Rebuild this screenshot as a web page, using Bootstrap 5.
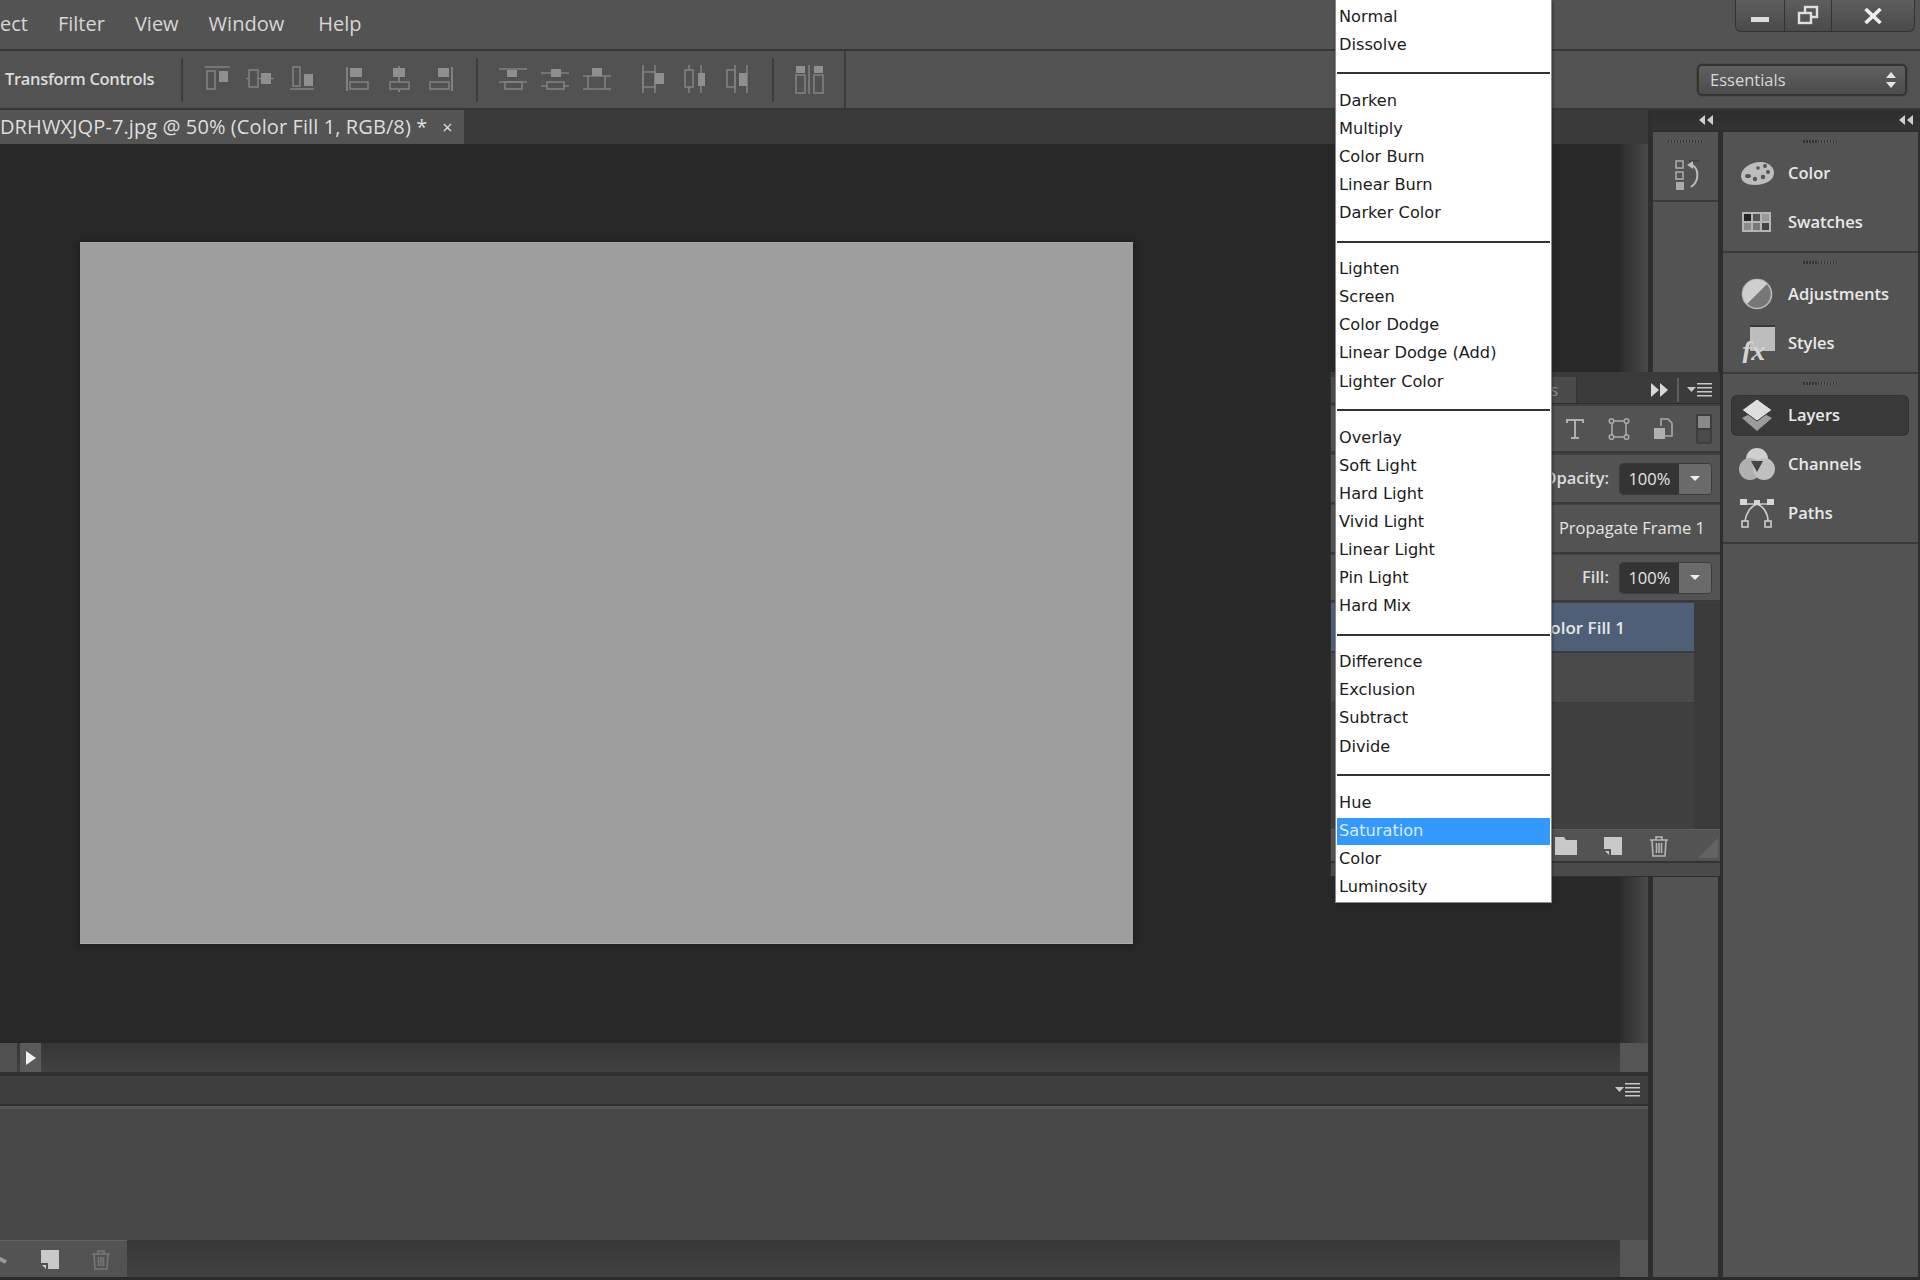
<!DOCTYPE html>
<html lang="en">
<head>
<meta charset="utf-8">
<title>Photoshop blend modes</title>
<link href="https://cdn.jsdelivr.net/npm/bootstrap@5.3.0/dist/css/bootstrap.min.css" rel="stylesheet">
<style>
html,body{margin:0;background:#2e2e2e}
.app{width:1920px;height:1280px;overflow:hidden;position:relative;background:#2e2e2e;font-family:"Open Sans","Noto Sans",sans-serif;color:#dcdcdc}
.menubar{height:49px;background:#535353;flex:none;border-bottom:0}
.menubar .nav-link{color:#d6d6d6;font-size:20px;padding:0;line-height:48px}
.menubar .nav{gap:30px}
.line{height:2px;background:#363636;flex:none}
.win{height:32px;width:180px;margin:0 5px 0 0;border:1px solid #333;border-top:0;border-radius:0 0 6px 6px;overflow:hidden;background:linear-gradient(#5e5e5e,#4a4a4a)}
.win .btn{border:0;border-radius:0;padding:0;height:31px;background:transparent;border-right:1px solid #333;display:flex;align-items:center;justify-content:center}
.win .btn:last-child{border-right:0}
.w49{width:49px}.w48{width:48px}.w83{width:83px}
.optbar{height:57px;background:#525252;flex:none}
.tc{width:181px;padding-left:5px;font-size:16.5px;font-weight:600;color:#dcdcdc;letter-spacing:-.33px;white-space:nowrap}
.vsep{width:2px;height:44px;background:#3d3d3d;flex:none}
.vsep.tall{height:57px}
.ms13{margin-left:13px}.ms14{margin-left:14px}
.ai{display:block;flex:none;fill:none;stroke:#808080;stroke-width:1.6}
.ai .f{fill:#8f8f8f;stroke:none}
.essentials{width:210px;height:32px;margin:1px 13px 0 0;padding:0 8px 0 11px;border:2px solid #333;border-radius:5px;background:linear-gradient(#606060,#4c4c4c);color:#d8d8d8;font-size:16.5px;box-shadow:0 0 0 1px #4a4a4a}
.work{height:1167px;flex:none}
.main{width:1648px;flex:none}
.tabs{height:34px;background:#3a3a3a;flex:none}
.doc-tab{width:464px;background:#545454;font-size:20px;letter-spacing:.1px;line-height:36px;color:#dedede;white-space:nowrap;overflow:hidden}
.doc-tab .x{margin-left:15px;font-size:18px}
.stage{height:899px;flex:none}
.pane{background:#282828;padding:98px 0 0 80px}
.sheet{width:1053px;height:702px;background:#9e9e9e;border-top:1px solid #a8a8a8;border-bottom:1px solid #aeaeae;box-shadow:0 0 6px #1a1a1a}
.vscroll{width:28px;flex:none;background:linear-gradient(90deg,#2c2c2c,#494949)}
.hscroll{height:29px;flex:none;background:linear-gradient(#363636,#414141)}
.thumb{width:17px;background:#505050}
.tri-btn{width:21px;margin-left:3px;background:#5a5a5a}
.corner{width:28px;background:#555}
.gap4{height:4px;flex:none;background:#303030}
.tl-head{height:28px;flex:none;background:#3e3e3e;padding-right:7px}
.tl-line{height:5px;flex:none;background:#555;border-top:2px solid #2f2f2f}
.tl-body{height:131px;flex:none;background:#474747}
.tl-foot{height:37px;flex:none;background:linear-gradient(#383838,#414141)}
.tl-tools{width:127px;background:#535353;border-top:1px solid #626262;position:relative;padding-left:40px;gap:31px}
.lnk{position:absolute;left:-8px;top:12px}
.dock{width:272px;flex:none;padding-left:4px}
.dock-head{height:20px;flex:none;background:linear-gradient(#2d2d2d,#343434);padding:0 6px 0 46px;margin-bottom:2px}
.col1{width:65px;margin:0 5px 0 1px;flex:none;background:#535353}
.col1-box{height:70px;border-bottom:2px solid #3a3a3a;padding-top:0}
.hist{margin-left:4px}
.col2{width:195px;flex:none;background:#535353}
.grip{height:3px;width:35px;margin:0 auto;flex:none;background:repeating-linear-gradient(90deg,#333 0 1.5px,#5c5c5c 1.5px 3px)}
.grp{padding:8px 0 4.5px;border-bottom:2px solid #3a3a3a}
.grp .grip{margin-bottom:5.5px}
.p-item{height:49px;padding-left:16px;gap:13px;font-size:16.5px;font-weight:600;color:#e8e8e8;position:relative}
.p-item>svg{flex:none;display:block}
.p-item.on::before{content:"";position:absolute;left:8px;right:9px;top:4px;bottom:4px;background:#3a3a3a;border-radius:6px;box-shadow:inset 0 0 0 1px #343434,0 1px 0 #5c5c5c}
.p-item>*{position:relative}
.layers{position:absolute;left:1330px;top:372px;width:390px;height:505px;background:#404040;border:1px solid #2f2f2f;border-right:0;border-top:3px solid #3a3a3a}
.lh{height:29px;flex:none;background:#3b3b3b;padding:2px 7px 0 0;border-bottom:1px solid #2f2f2f;margin-bottom:2px;color:#999}
.s-tab{width:246px;height:100%;background:#4b4b4b;border-right:1px solid #333;text-align:right;padding-right:18px;font-size:16px;margin-right:73px;color:#8e8e8e;line-height:26px}
.lrow{background:#535353;border-bottom:2px solid #3a3a3a;margin-bottom:1px;flex:none}
.r-tools{height:47px;padding-right:8px;gap:22px;margin-bottom:2px}
.r-field{height:49px;padding-right:8px;gap:10px;font-size:16.5px;font-weight:600}
.r-prop{height:49px;padding-right:15px;font-size:16.5px;justify-content:flex-end;color:#e4e4e4}
.r-fill{height:47px;padding-right:8px;gap:10px;font-size:16.5px;font-weight:600}
.blend{height:32px;width:93px;border:1px solid #3c3c3c;border-radius:4px;overflow:hidden;font-weight:400;font-size:16.5px}
.blend .v{width:60px;background:#343434;text-align:center;color:#e6e6e6;line-height:30px}
.blend .a{width:33px;background:#6a6a6a;display:flex;align-items:center;justify-content:center}
.lay-rows{width:363px;flex:none}
.lay-strip{flex:1;background:#3b3b3b}
.lay-a{height:50px;background:#4f5f78;color:#e6e6e6;font-size:17px;font-weight:600;line-height:50px;justify-content:flex-end;padding:2px 69px 0 0;border-bottom:2px solid #3b3b3b}
.lay-b{height:50px;background:#4a4a4a;border-bottom:1px solid #3a3a3a}
.l-foot{height:32px;flex:none;background:#535353;border-top:1px solid #5e5e5e;padding-left:224px;gap:26px;position:relative}
.l-grip{position:absolute;right:1px;bottom:2px}
.l-strip{height:15px;flex:none;background:#4a4a4a;border-top:2px solid #333}
.blendmenu{display:block;position:absolute;left:1336px;top:0;width:215px;height:902px;margin:0;padding:3px 1px 0;border:0;border-radius:0;background:#fff;box-shadow:0 0 0 1px #8a8a8a,1px 2px 3px #222;font-family:"DejaVu Sans",sans-serif;font-size:16.2px;min-width:0;list-style:none}
.blendmenu li{height:28.08px;display:flex;align-items:center}
.blendmenu .dropdown-item{padding:0 0 0 2px;color:#1c1c1c;line-height:26px;height:27px}
.blendmenu .dropdown-item.active{background:#3399ff;color:#d9ecff}
.blendmenu .dropdown-divider{width:100%;margin:0;border:0;border-top:2px solid #333;opacity:1}
.foot-strip{height:3px;flex:none;background:#2a2a2a}
</style>
</head>
<body>
<div class="app d-flex flex-column">

<header class="menubar d-flex align-items-start">
  <nav class="nav">
    <a class="nav-link" href="#">ect</a>
    <a class="nav-link" href="#">Filter</a>
    <a class="nav-link" href="#">View</a>
    <a class="nav-link" href="#">Window</a>
    <a class="nav-link ms-1" href="#">Help</a>
  </nav>
  <div class="win btn-group ms-auto" role="group">
    <button class="btn w49" aria-label="Minimize"><svg width="18" height="26"><rect width="18" height="5" y="14" fill="#dcdcdc"/></svg></button>
    <button class="btn w48" aria-label="Restore"><svg width="22" height="21" fill="none" stroke="#e0e0e0" stroke-width="2.4"><rect x="8" y="2" width="12" height="10"/><rect x="2" y="8" width="12" height="10" fill="#555"/></svg></button>
    <button class="btn w83" aria-label="Close"><svg width="18" height="16" stroke="#eee" stroke-width="3.6" fill="none"><path d="M1.5 1 16.5 15M16.5 1 1.5 15"/></svg></button>
  </div>
</header>
<div class="line"></div>

<div class="optbar d-flex align-items-center">
  <div class="tc">Transform Controls</div>
  <div class="vsep"></div>
  <svg class="ai ms13" width="42" height="30"><path d="M9 2h25"/><rect x="11" y="6" width="8" height="18"/><rect class="f" x="23" y="6" width="9" height="11"/></svg>
  <svg class="ai" width="42" height="30"><path d="M8 13.5h3M20 13.5h3M33 13.5h3"/><rect x="11" y="5" width="9" height="17"/><rect class="f" x="23" y="8" width="10" height="11"/></svg>
  <svg class="ai" width="42" height="30"><path d="M10 24h24"/><rect x="13" y="2" width="7" height="19"/><rect class="f" x="24" y="9" width="9" height="12"/></svg>
  <svg class="ai ms14" width="42" height="30"><path d="M11 2v24" stroke-width="2"/><rect class="f" x="14" y="3" width="12" height="9"/><rect x="14" y="17" width="18" height="7"/></svg>
  <svg class="ai" width="42" height="30"><path d="M21 1v3M21 12v5M21 24v3" stroke-width="2"/><rect class="f" x="15" y="3" width="12" height="9"/><rect x="12" y="17" width="19" height="7"/></svg>
  <svg class="ai" width="42" height="30"><path d="M32 2v24" stroke-width="2"/><rect class="f" x="18" y="3" width="11" height="9"/><rect x="10" y="17" width="19" height="7"/></svg>
  <div class="vsep ms14"></div>
  <svg class="ai ms14" width="42" height="30"><path d="M7 4h28M7 17h28"/><rect class="f" x="15" y="5" width="10" height="7"/><rect x="13" y="17" width="17" height="7"/></svg>
  <svg class="ai" width="42" height="30"><path d="M7 8h28M7 21h6M30 21h5"/><rect class="f" x="17" y="4" width="10" height="8"/><rect x="13" y="17" width="17" height="7"/></svg>
  <svg class="ai" width="42" height="30"><path d="M7 11h28M7 24h28"/><rect class="f" x="16" y="3" width="10" height="8"/><path d="M12 11v13M29 11v13"/></svg>
  <svg class="ai ms14" width="42" height="30"><path d="M11 0v28M23 0v28"/><rect x="11" y="7" width="12" height="15"/><rect class="f" x="23" y="8" width="9" height="11"/></svg>
  <svg class="ai" width="42" height="30"><path d="M15 0v5M15 22v6M27 0v28"/><rect x="11" y="5" width="8" height="17"/><rect class="f" x="24" y="8" width="7" height="13"/></svg>
  <svg class="ai" width="42" height="30"><path d="M19 0v28M31 0v28"/><rect x="11" y="5" width="8" height="17"/><rect class="f" x="23" y="8" width="8" height="13"/></svg>
  <div class="vsep ms14"></div>
  <svg class="ai ms14" width="42" height="30"><path d="M21 0v29"/><rect class="f" x="8" y="1" width="9" height="7"/><rect class="f" x="26" y="1" width="9" height="7"/><rect x="8" y="10" width="9" height="18"/><rect x="26" y="10" width="9" height="18"/></svg>
  <div class="vsep tall ms14"></div>
  <button class="btn essentials ms-auto d-flex align-items-center justify-content-between" type="button">Essentials
    <svg width="12" height="18" fill="#e4e4e4"><path d="M6 1 11 7H1zM6 17 1 11h10z"/></svg>
  </button>
</div>
<div class="line"></div>

<div class="work d-flex">
  <section class="main d-flex flex-column">
    <div class="tabs d-flex">
      <div class="doc-tab d-flex align-items-center">DRHWXJQP-7.jpg @ 50% (Color Fill 1, RGB/8) *<span class="x">×</span></div>
    </div>
    <div class="stage d-flex">
      <div class="pane flex-grow-1"><div class="sheet"></div></div>
      <div class="vscroll"></div>
    </div>
    <div class="hscroll d-flex">
      <div class="thumb"></div>
      <div class="tri-btn d-flex align-items-center justify-content-center"><svg width="12" height="16" fill="#f2f2f2"><path d="M1 1 11 8 1 15z"/></svg></div>
      <div class="flex-grow-1"></div>
      <div class="corner"></div>
    </div>
    <div class="gap4"></div>
    <div class="tl-head d-flex align-items-center justify-content-end">
      <svg width="26" height="16" fill="#c8c8c8"><path d="M0 5h9L4.500 10z"/><path d="M10 1h15v1.500H10zM10 5h15v1.500H10zM10 9h15v1.500H10zM10 13h15v1.500H10z"/></svg>
    </div>
    <div class="tl-line"></div>
    <div class="tl-body"></div>
    <div class="tl-foot d-flex">
      <div class="tl-tools d-flex align-items-center">
        <svg class="lnk" width="20" height="14" fill="none" stroke="#999" stroke-width="4"><path d="M2 3 14 9"/></svg>
        <svg width="20" height="21" fill="#c9c9c9"><path d="M1 1h18v19H8v-6H1z"/><path d="M2 16h4v4z"/></svg>
        <svg width="20" height="21" fill="none" stroke="#777" stroke-width="1.6"><path d="M1 5h18M7 5V2h6v3M3 5l1 15h12l1-15M7.500 8v9M10 8v9M12.500 8v9"/></svg>
      </div>
      <div class="flex-grow-1"></div>
      <div class="corner"></div>
    </div>
  </section>

  <aside class="dock d-flex flex-column">
    <div class="dock-head d-flex align-items-center justify-content-between">
      <svg width="16" height="12" fill="#cfcfcf"><path d="M7 1v10L1 6zM15 1v10L9 6z"/></svg>
      <svg width="16" height="12" fill="#cfcfcf"><path d="M7 1v10L1 6zM15 1v10L9 6z"/></svg>
    </div>
    <div class="d-flex flex-grow-1">
      <div class="col1">
        <div class="col1-box d-flex flex-column align-items-center">
          <div class="grip mt-2 mb-3"></div>
          <svg class="hist" width="28" height="32" fill="none" stroke="#aaa" stroke-width="1.6"><rect x="2" y="2" width="7" height="7"/><rect x="2" y="13" width="7" height="7"/><rect x="2" y="23" width="8" height="8" fill="#aaa" stroke="none"/><path d="M15 2h10" stroke="#3c3c3c" stroke-width="1.500"/><path d="M17 6c8 2 9 16 0 22" stroke="#bbb" stroke-width="2"/><path d="M13 6l6-4v8z" fill="#bbb" stroke="none"/></svg>
        </div>
      </div>
      <div class="col2">
        <div class="grp">
          <div class="grip"></div>
          <div class="p-item d-flex align-items-center">
            <svg width="36" height="28"><path d="M2 17C2 9 13 2 23 3c8 1 12 6 12 11 0 8-10 12-19 12C8 26 2 23 2 17z" fill="#bdbdbd"/><g fill="#555"><ellipse cx="9" cy="17" rx="3" ry="2"/><circle cx="16" cy="20" r="2.200"/><circle cx="24" cy="18" r="2.200"/><circle cx="29" cy="13" r="2"/><circle cx="26" cy="7" r="2"/><circle cx="19" cy="9" r="1.800"/></g></svg>
            <span>Color</span>
          </div>
          <div class="p-item d-flex align-items-center">
            <svg width="36" height="26"><rect x="3" y="3" width="29" height="20" fill="#b5b5b5"/><rect x="5" y="5" width="7" height="7" fill="#222"/><rect x="14" y="5" width="7" height="7" fill="#555"/><rect x="23" y="5" width="7" height="7" fill="#999"/><rect x="5" y="14" width="7" height="7" fill="#8a8a8a"/><rect x="14" y="14" width="7" height="7" fill="#777"/><rect x="23" y="14" width="7" height="7" fill="#444"/></svg>
            <span>Swatches</span>
          </div>
        </div>
        <div class="grp">
          <div class="grip"></div>
          <div class="p-item d-flex align-items-center">
            <svg width="36" height="34"><circle cx="18" cy="17" r="14.500" fill="#777" stroke="#b8b8b8" stroke-width="1.600"/><path d="M28 7a14 14 0 0 0-20 20z" fill="#cfcfcf"/></svg>
            <span>Adjustments</span>
          </div>
          <div class="p-item d-flex align-items-center">
            <svg width="36" height="40"><rect x="11" y="3" width="25" height="25" fill="#bdbdbd"/><rect x="11" y="2" width="25" height="2" fill="#3a3a3a"/><text x="3" y="37" font-family="Liberation Serif,serif" font-style="italic" font-size="28" fill="#d4d4d4">fx</text></svg>
            <span>Styles</span>
          </div>
        </div>
        <div class="grp">
          <div class="grip"></div>
          <div class="p-item on d-flex align-items-center">
            <svg width="36" height="34"><path d="M18 12 33 20 18 33 3 20z" fill="#9c9c9c"/><path d="M18 1 33 12 18 23 3 12z" fill="#dedede" stroke="#3a3a3a"/></svg>
            <span>Layers</span>
          </div>
          <div class="p-item d-flex align-items-center">
            <svg width="36" height="34"><circle cx="18" cy="12" r="11" fill="#cfcfcf"/><circle cx="11" cy="22" r="11" fill="#b0b0b0"/><circle cx="25" cy="22" r="11" fill="#c0c0c0"/><path d="M12 14h12l-6 11z" fill="#444"/></svg>
            <span>Channels</span>
          </div>
          <div class="p-item d-flex align-items-center">
            <svg width="36" height="34" fill="none" stroke="#ccc" stroke-width="1.600"><path d="M7 8h9M21 8h8M18 8c-6 2-11 9-12 17M18 8c6 2 11 9 11 17"/><g fill="#d6d6d6" stroke="none"><rect x="1" y="3" width="7" height="6"/><rect x="15" y="4" width="6" height="5"/><rect x="28" y="3" width="7" height="6"/></g><rect x="3" y="25" width="6" height="6"/><rect x="26" y="25" width="6" height="6"/></svg>
            <span>Paths</span>
          </div>
        </div>
      </div>
    </div>
  </aside>
</div>
<div class="foot-strip"></div>

<div class="layers d-flex flex-column">
  <div class="lh d-flex align-items-center">
    <div class="s-tab">s</div>
    <svg width="18" height="16" fill="#d8d8d8"><path d="M1 1 9 8 1 15zM10 1 18 8 10 15z"/></svg>
    <svg class="ms-2" width="6" height="24" fill="#5e5e5e"><rect x="1" y="0" width="2" height="24"/></svg>
    <svg class="ms-auto" width="26" height="16" fill="#c8c8c8"><path d="M0 5h9L4.500 10z"/><path d="M10 1h15v1.500H10zM10 5h15v1.500H10zM10 9h15v1.500H10zM10 13h15v1.500H10z"/></svg>
  </div>
  <div class="lrow r-tools d-flex align-items-center justify-content-end">
    <svg width="22" height="24" fill="none" stroke="#b0b0b0" stroke-width="2"><path d="M3 6V3h16v3M11 3v17M7 21h8"/></svg>
    <svg width="22" height="24" fill="none" stroke="#a8a8a8" stroke-width="1.600"><rect x="4" y="4" width="14" height="16"/><g fill="#535353"><circle cx="3.500" cy="4" r="2.300"/><circle cx="18.500" cy="4" r="2.300"/><circle cx="3.500" cy="20" r="2.300"/><circle cx="18.500" cy="20" r="2.300"/></g></svg>
    <svg width="22" height="24" fill="none" stroke="#a8a8a8" stroke-width="1.600"><path d="M9 9V2h7l4 4v13h-8"/><rect x="2" y="11" width="11" height="11" fill="#b0b0b0" stroke="none"/></svg>
    <svg width="16" height="30"><rect width="16" height="30" rx="2" fill="#3e3e3e"/><rect x="2" y="2" width="12" height="12" fill="#8a8a8a"/><rect x="2" y="16" width="12" height="12" fill="#4a4a4a"/></svg>
  </div>
  <div class="lrow r-field d-flex align-items-center justify-content-end">
    <span>Opacity:</span>
    <div class="blend d-flex"><span class="v">100%</span><span class="a"><svg width="12" height="7" fill="#eee"><path d="M1 1h10L6 6z"/></svg></span></div>
  </div>
  <div class="lrow r-prop d-flex align-items-center"><span>Propagate Frame 1</span></div>
  <div class="lrow r-fill d-flex align-items-center justify-content-end">
    <span>Fill:</span>
    <div class="blend d-flex"><span class="v">100%</span><span class="a"><svg width="12" height="7" fill="#eee"><path d="M1 1h10L6 6z"/></svg></span></div>
  </div>
  <div class="d-flex flex-grow-1">
    <div class="lay-rows">
      <div class="lay-a d-flex align-items-center">Color Fill 1</div>
      <div class="lay-b"></div>
    </div>
    <div class="lay-strip"></div>
  </div>
  <div class="l-foot d-flex align-items-center">
    <svg width="22" height="20" fill="#c8c8c8"><path d="M0 1h9l2 3h11v15H0z"/></svg>
    <svg width="20" height="20" fill="#c9c9c9"><path d="M1 1h18v18H8v-6H1z"/><path d="M2 15h4v4z"/></svg>
    <svg width="20" height="22" fill="none" stroke="#b5b5b5" stroke-width="1.600"><path d="M1 5h18M7 5V2h6v3M3 5l1 16h12l1-16M7.500 8v10M10 8v10M12.500 8v10"/></svg>
    <svg class="l-grip" width="22" height="22" fill="#6e6e6e"><path d="M21 1v20H1z" opacity=".6"/></svg>
  </div>
  <div class="l-strip"></div>
</div>

<ul class="dropdown-menu blendmenu">
  <li><a class="dropdown-item" href="#">Normal</a></li>
  <li><a class="dropdown-item" href="#">Dissolve</a></li>
  <li><hr class="dropdown-divider"></li>
  <li><a class="dropdown-item" href="#">Darken</a></li>
  <li><a class="dropdown-item" href="#">Multiply</a></li>
  <li><a class="dropdown-item" href="#">Color Burn</a></li>
  <li><a class="dropdown-item" href="#">Linear Burn</a></li>
  <li><a class="dropdown-item" href="#">Darker Color</a></li>
  <li><hr class="dropdown-divider"></li>
  <li><a class="dropdown-item" href="#">Lighten</a></li>
  <li><a class="dropdown-item" href="#">Screen</a></li>
  <li><a class="dropdown-item" href="#">Color Dodge</a></li>
  <li><a class="dropdown-item" href="#">Linear Dodge (Add)</a></li>
  <li><a class="dropdown-item" href="#">Lighter Color</a></li>
  <li><hr class="dropdown-divider"></li>
  <li><a class="dropdown-item" href="#">Overlay</a></li>
  <li><a class="dropdown-item" href="#">Soft Light</a></li>
  <li><a class="dropdown-item" href="#">Hard Light</a></li>
  <li><a class="dropdown-item" href="#">Vivid Light</a></li>
  <li><a class="dropdown-item" href="#">Linear Light</a></li>
  <li><a class="dropdown-item" href="#">Pin Light</a></li>
  <li><a class="dropdown-item" href="#">Hard Mix</a></li>
  <li><hr class="dropdown-divider"></li>
  <li><a class="dropdown-item" href="#">Difference</a></li>
  <li><a class="dropdown-item" href="#">Exclusion</a></li>
  <li><a class="dropdown-item" href="#">Subtract</a></li>
  <li><a class="dropdown-item" href="#">Divide</a></li>
  <li><hr class="dropdown-divider"></li>
  <li><a class="dropdown-item" href="#">Hue</a></li>
  <li><a class="dropdown-item active" href="#">Saturation</a></li>
  <li><a class="dropdown-item" href="#">Color</a></li>
  <li><a class="dropdown-item" href="#">Luminosity</a></li>
</ul>

</div>
<script src="https://cdn.jsdelivr.net/npm/bootstrap@5.3.0/dist/js/bootstrap.bundle.min.js"></script>
</body>
</html>
